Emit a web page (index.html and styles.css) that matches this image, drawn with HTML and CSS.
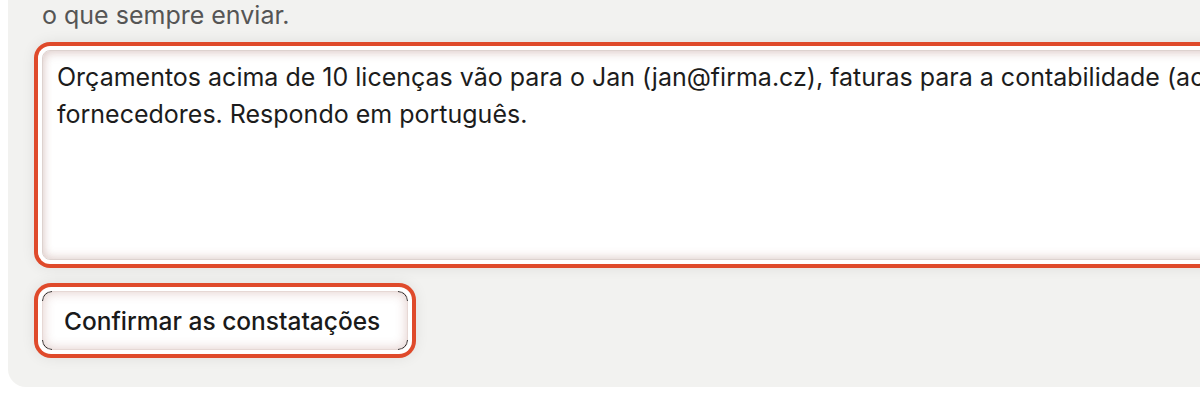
FILE: index.html
```html
<!DOCTYPE html>
<html lang="pt">

<head>
    <meta charset="utf-8">
    <meta name="viewport" content="width=device-width, initial-scale=1.0">
    <title>Constatações</title>
    <link rel="stylesheet" href="styles.css">
</head>

<body>

<div class="page">
    <div class="card">
        <!-- fim da dica, o resto ficou acima da dobra -->
        <p class="hint">o que sempre enviar.</p>

        <textarea class="notes" name="notes">Orçamentos acima de 10 licenças vão para o Jan (jan@firma.cz), faturas para a contabilidade (ac@firma.cz), ignoro ofertas de
fornecedores. Respondo em português.</textarea>

        <div class="actions">
            <button class="confirm" type="button">Confirmar as constatações</button>
        </div>
    </div>
</div>

</body>

</html>
```

FILE: styles.css
```css
/* base */
*
{
    box-sizing: border-box;
    margin: 0;
}

html,
body
{
    background-color: #ffffff;
    overflow: hidden;
}

body
{
    font-family: Inter, "Liberation Sans", sans-serif;
    color: #1c1c1c;
}

.page
{
    padding-left: 8px;
    margin-top: -2px;
}

/* cartão cinza */
.card
{
    width: 1900px;
    padding: 0 0 37px 34px;
    background-color: #f2f2f0;
    border-radius: 0 0 0 18px;
}

.hint
{
    font-size: 25px;
    line-height: 34px;
    color: #555555;
    margin-bottom: 18px;
}

/* caixa de texto com foco */
.notes
{
    display: block;
    width: 1800px;
    height: 210px;
    padding: 8px 14px;
    font-family: Inter, "Liberation Sans", sans-serif;
    font-size: 25px;
    line-height: 37px;
    color: #1c1c1c;
    background-color: #ffffff;
    border: 1px solid #ddd2cf;
    border-radius: 8px;
    resize: none;
    outline: none;
    box-shadow: inset 0 3px 10px rgba(150, 90, 80, 0.22), inset 0 -3px 10px rgba(150, 90, 80, 0.18),
        0 0 0 4px #ffffff, 0 0 0 8px #df4a2b, 0 0 14px 8px rgba(0, 0, 0, 0.08);
}

.actions
{
    display: flex;
    margin-top: 31px;
}

.confirm
{
    position: relative;
    width: 366px;
    height: 59px;
    padding: 0 21px;
    font-family: Inter, "Liberation Sans", sans-serif;
    font-size: 24.5px;
    font-weight: 500;
    color: #1a1a1a;
    text-align: left;
    white-space: nowrap;
    background-color: #ffffff;
    border: 1px solid #e6d8d5;
    border-radius: 9px;
    cursor: pointer;
    box-shadow: inset 0 0 12px rgba(160, 90, 80, 0.32),
        0 0 0 4px #ffffff, 0 0 0 8px #df4a2b, 0 0 14px 8px rgba(0, 0, 0, 0.08);
}

/* cantos escuros do botão */
.confirm::after
{
    content: "";
    position: absolute;
    top: -1px;
    left: -1px;
    right: -1px;
    bottom: -1px;
    border: 1.5px solid #222222;
    border-radius: 10px;
    -webkit-mask: linear-gradient(to right, #000 10px, transparent 10px, transparent calc(100% - 10px), #000 calc(100% - 10px)),
        linear-gradient(to bottom, #000 10px, transparent 10px, transparent calc(100% - 10px), #000 calc(100% - 10px));
    -webkit-mask-composite: source-in;
    mask-composite: intersect;
}
```
